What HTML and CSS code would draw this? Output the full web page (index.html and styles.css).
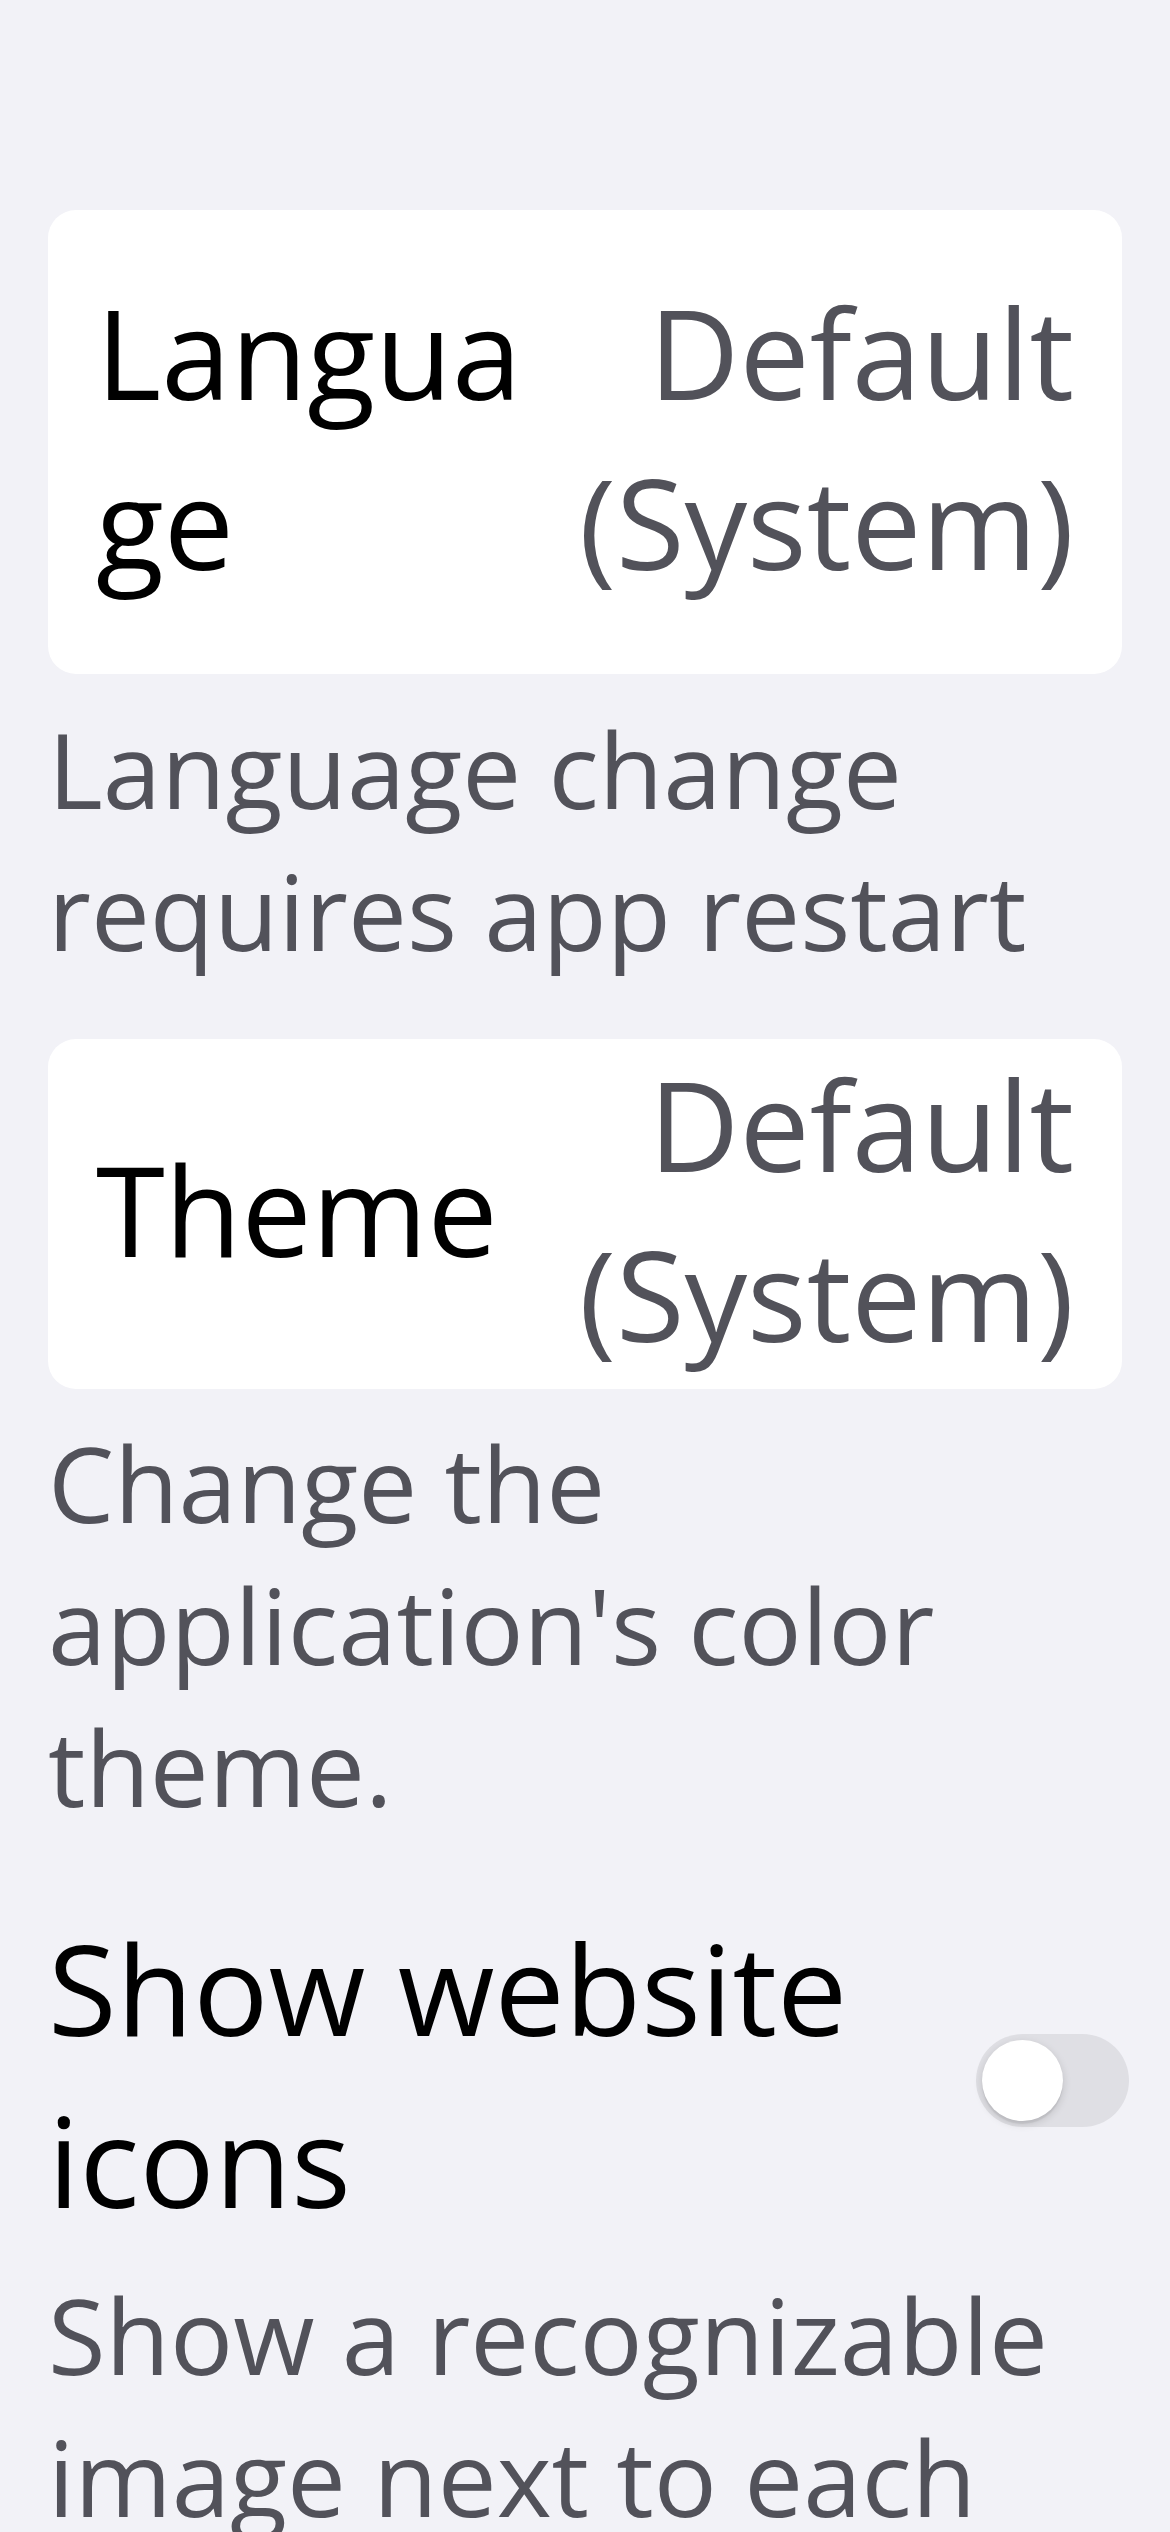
FILE: index.html
```html
<!DOCTYPE html>
<html lang="en">
<head>
<meta charset="utf-8">
<title>Settings</title>
<link rel="stylesheet" href="styles.css">
</head>
<body>
<main class="settings">
  <section class="group">
    <div class="card card-language">
      <div class="row">
        <span class="row-title">Language</span>
        <span class="row-value">Default (System)</span>
      </div>
    </div>
    <p class="caption caption-first">Language change requires app restart</p>
  </section>

  <section class="group">
    <div class="card card-theme">
      <div class="row">
        <span class="row-title">Theme</span>
        <span class="row-value">Default (System)</span>
      </div>
    </div>
    <p class="caption caption-theme">Change the application's color theme.</p>
  </section>

  <section class="group group-toggle">
    <div class="row toggle-row">
      <span class="row-title toggle-title">Show website icons</span>
      <span class="switch" role="switch" aria-checked="false"><span class="knob"></span></span>
    </div>
    <p class="caption caption-toggle">Show a recognizable image next to each</p>
  </section>
</main>
</body>
</html>
```

FILE: styles.css
```css
html, body {
  margin: 0;
  padding: 0;
  background: #f2f2f7;
}

body {
  font-family: "Open Sans", "Noto Sans", sans-serif;
  color: #000;
  overflow: hidden;
  height: 2532px;
}

.settings {
  padding: 210px 48px 0;
}

.card {
  background: #ffffff;
  border-radius: 28px;
  padding: 0 48px;
}

.card-language {
  padding-top: 57px;
  padding-bottom: 67px;
}

.card-theme {
  padding-top: 0;
  padding-bottom: 10px;
}

.row {
  display: flex;
  align-items: center;
}

.row-title {
  flex: 1 1 0;
  min-width: 0;
  font-size: 125px;
  line-height: 170px;
  color: #000;
  overflow-wrap: anywhere;
}

.row-value {
  flex: 0 0 auto;
  max-width: 520px;
  font-size: 125px;
  line-height: 170px;
  color: #52525a;
  text-align: right;
}

.caption {
  margin: 24px 0 0;
  font-size: 105px;
  line-height: 142px;
  color: #52525a;
}

.caption-first {
  margin-bottom: 57px;
}

.caption-theme {
  margin-top: 23px;
}

.group-toggle {
  margin-top: 64px;
}

.toggle-row {
  gap: 20px;
}

.toggle-title {
  line-height: 172px;
}

.switch {
  flex: 0 0 auto;
  position: relative;
  width: 153px;
  height: 93px;
  margin-right: -7px;
  margin-top: 12px;
  border-radius: 47px;
  background: #dfdfe4;
}

.knob {
  position: absolute;
  left: 6px;
  top: 6px;
  width: 81px;
  height: 81px;
  border-radius: 50%;
  background: #ffffff;
  box-shadow: 0 3px 8px rgba(0, 0, 0, 0.15), 0 3px 1px rgba(0, 0, 0, 0.06);
}

.caption-toggle {
  margin-top: 18px;
}
```
